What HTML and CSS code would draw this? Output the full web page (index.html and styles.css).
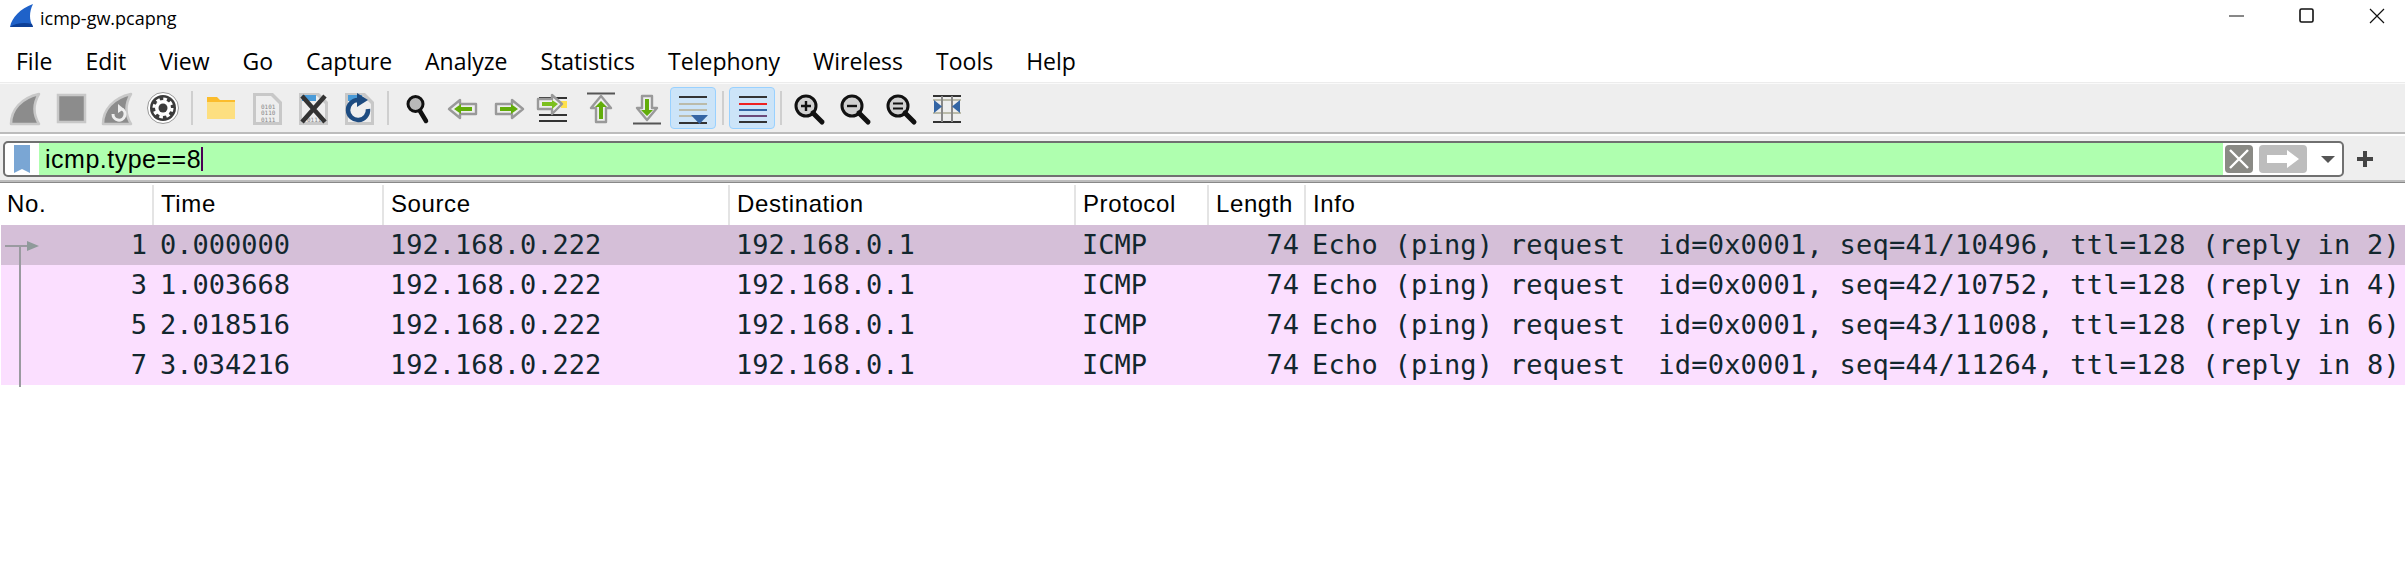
FILE: index.html
```html
<!DOCTYPE html>
<html lang="en">
<head>
  <meta charset="UTF-8" />
  <title>icmp-gw.pcapng</title>
  <link rel="stylesheet" href="styles.css">
</head>
<body>

  <div class="titlebar">
    <svg class="logo" width="24" height="24" viewBox="0 0 24 24">
      <path d="M0 23 C2 13 10 5 23 0 C19 8 19 16 23 23 Z" fill="#1f62c9"/>
      <path d="M0 23 C5 19 15 18 22 20 L23 23 Z" fill="#0d3f96"/>
    </svg>
    <span class="title">icmp-gw.pcapng</span>
    <div class="win-buttons">
      <svg width="16" height="16" viewBox="0 0 16 16"><path d="M0 8 H15" stroke="#111" stroke-width="1"/></svg>
      <svg width="16" height="16" viewBox="0 0 16 16"><rect x="1" y="1" width="13" height="13" rx="1.5" fill="none" stroke="#111" stroke-width="1.6"/></svg>
      <svg width="16" height="16" viewBox="0 0 16 16"><path d="M1 1 L15 15 M15 1 L1 15" stroke="#111" stroke-width="1.2"/></svg>
    </div>
  </div>

  <nav class="menubar">
    <span>File</span><span>Edit</span><span>View</span><span>Go</span><span>Capture</span><span>Analyze</span><span>Statistics</span><span>Telephony</span><span>Wireless</span><span>Tools</span><span>Help</span>
  </nav>

  <div class="toolbar">
    <button class="tool"><svg width="36" height="36" viewBox="0 0 36 36"><path d="M4 34 C4 20 14 8 32 4 C26 14 26 24 32 34 Z" fill="#8c8c8c" stroke="#c8c8c8" stroke-width="2.5" stroke-linejoin="round"/></svg></button>
    <button class="tool"><svg width="36" height="36" viewBox="0 0 36 36"><rect x="5" y="5" width="27" height="27" fill="#8c8c8c" stroke="#c8c8c8" stroke-width="2.5"/></svg></button>
    <button class="tool"><svg width="36" height="36" viewBox="0 0 36 36"><path d="M4 34 C4 20 14 8 32 4 C26 14 26 24 32 34 Z" fill="#8c8c8c" stroke="#c8c8c8" stroke-width="2.5" stroke-linejoin="round"/><path d="M14 24 A6 6 0 1 0 23 19" fill="none" stroke="#eee" stroke-width="3"/><path d="M19 14 L25 19 L19 23 Z" fill="#eee"/></svg></button>
    <button class="tool"><svg width="36" height="36" viewBox="0 0 36 36"><circle cx="18" cy="18" r="15.5" fill="#fff" stroke="#999" stroke-width="1"/><circle cx="18" cy="18" r="13" fill="#3b3b3b"/><circle cx="18" cy="18" r="8" fill="#fff"/><circle cx="18" cy="18" r="9" fill="none" stroke="#fff" stroke-width="3" stroke-dasharray="3.6 3.47"/><circle cx="18" cy="18" r="4.5" fill="#3b3b3b"/></svg></button>
    <i class="sep"></i>
    <button class="tool"><svg width="36" height="36" viewBox="0 0 36 36"><path d="M4 7 H14 L17 10 H32 V14 H4 Z" fill="#fbbc2c"/><rect x="4" y="12" width="28" height="17" fill="#fddf80"/></svg></button>
    <button class="tool"><svg width="36" height="36" viewBox="0 0 36 36"><use href="#page"/><text class="bits" x="12" y="19">0101</text><text class="bits" x="12" y="25">0110</text><text class="bits" x="12" y="31.5">0111</text></svg></button>
    <button class="tool"><svg width="36" height="36" viewBox="0 0 36 36"><use href="#page"/><path d="M7 5 H21 V11 H7 Z" fill="#4a9bd8"/><text class="bits" x="12" y="31.5">0111</text><path d="M7 6 L30 32 M30 6 L7 32" stroke="#333" stroke-width="4.5"/></svg></button>
    <button class="tool"><svg width="36" height="36" viewBox="0 0 36 36"><use href="#page"/><path d="M7 5 H21 V11 H7 Z" fill="#4a9bd8"/><path d="M27 19 A10 10 0 1 1 17 10" fill="none" stroke="#1d4b80" stroke-width="4.5"/><path d="M16 3 L27 10 L16 17 Z" fill="#1d4b80"/></svg></button>
    <i class="sep"></i>
    <button class="tool"><svg width="36" height="36" viewBox="0 0 36 36"><circle cx="16.5" cy="14" r="7.5" fill="#b8b8b8" stroke="#111" stroke-width="3"/><path d="M21 21 L27 31" stroke="#111" stroke-width="4.5" stroke-linecap="round"/></svg></button>
    <button class="tool"><svg width="36" height="36" viewBox="0 0 36 36"><path d="M4 19 L15 10 V14 H31 V24 H15 V28 Z" fill="#eee" stroke="#999" stroke-width="2.4" stroke-linejoin="round"/><path d="M9 19 L16 14 V17 H27 V21 H16 V24 Z" fill="#62ad0a"/></svg></button>
    <button class="tool"><svg width="36" height="36" viewBox="0 0 36 36"><path d="M32 19 L21 10 V14 H5 V24 H21 V28 Z" fill="#eee" stroke="#999" stroke-width="2.4" stroke-linejoin="round"/><path d="M27 19 L20 14 V17 H9 V21 H20 V24 Z" fill="#62ad0a"/></svg></button>
    <button class="tool"><svg width="36" height="36" viewBox="0 0 36 36"><path d="M2 8 H30 M2 14 H30 M2 25 H30 M2 31 H30" stroke="#333" stroke-width="2"/><rect x="24" y="11" width="6" height="7" fill="#ffe14d"/><path d="M25 14 L15 5 V9 H1 V19 H15 V24 Z" fill="#eee" stroke="#999" stroke-width="2.4" stroke-linejoin="round"/><path d="M21 14 L15 10 V12 H5 V16 H15 V19 Z" fill="#7cc01e"/></svg></button>
    <button class="tool"><svg width="36" height="36" viewBox="0 0 36 36"><path d="M4 3.5 H32" stroke="#555" stroke-width="2"/><path d="M18 6 L28 18 H23 V32 H13 V18 H8 Z" fill="#eee" stroke="#999" stroke-width="2.4" stroke-linejoin="round"/><path d="M18 11 L24 17 H20 V29 H16 V17 H12 Z" fill="#62ad0a"/></svg></button>
    <button class="tool"><svg width="36" height="36" viewBox="0 0 36 36"><path d="M4 33.5 H32" stroke="#555" stroke-width="2"/><path d="M13 6 H23 V18 H28 L18 30 L8 18 H13 Z" fill="#eee" stroke="#999" stroke-width="2.4" stroke-linejoin="round"/><path d="M16 9 H20 V20 H24 L18 26 L12 20 H16 Z" fill="#62ad0a"/></svg></button>
    <button class="tool active"><svg width="36" height="36" viewBox="0 0 36 36"><path d="M4 7 H32 M4 33 H32" stroke="#333" stroke-width="2"/><path d="M4 14 H32 M4 20 H32 M4 26 H32" stroke="#bbbbaa" stroke-width="2"/><path d="M16 25 H33 L24.500 34 Z" fill="#3465a4"/></svg></button>
    <i class="sep narrow"></i>
    <button class="tool active"><svg width="36" height="36" viewBox="0 0 36 36"><path d="M5 7 H33 M5 32 H33" stroke="#333" stroke-width="2"/><path d="M5 14 H33" stroke="#ee2222" stroke-width="2"/><path d="M5 20 H33" stroke="#3465a4" stroke-width="2"/><path d="M5 26 H33" stroke="#6b4a7a" stroke-width="2"/></svg></button>
    <i class="sep tight"></i>
    <button class="tool"><svg width="36" height="36" viewBox="0 0 36 36"><circle cx="15" cy="16" r="10" fill="#d0d0d0" stroke="#111" stroke-width="3"/><path d="M22 23 L31 32" stroke="#111" stroke-width="5" stroke-linecap="round"/><path d="M10 16 H20 M15 11 V21" stroke="#111" stroke-width="2.4"/></svg></button>
    <button class="tool"><svg width="36" height="36" viewBox="0 0 36 36"><circle cx="15" cy="16" r="10" fill="#d0d0d0" stroke="#111" stroke-width="3"/><path d="M22 23 L31 32" stroke="#111" stroke-width="5" stroke-linecap="round"/><path d="M10 16 H20" stroke="#111" stroke-width="2.4"/></svg></button>
    <button class="tool"><svg width="36" height="36" viewBox="0 0 36 36"><circle cx="15" cy="16" r="10" fill="#d0d0d0" stroke="#111" stroke-width="3"/><path d="M22 23 L31 32" stroke="#111" stroke-width="5" stroke-linecap="round"/><path d="M10 13.500 H20 M10 18.500 H20" stroke="#111" stroke-width="2.2"/></svg></button>
    <button class="tool"><svg width="36" height="36" viewBox="0 0 36 36"><path d="M4 6 H32 M4 32 H32" stroke="#333" stroke-width="2"/><path d="M4 10 H32 M4 23 H32" stroke="#bbbbaa" stroke-width="2"/><path d="M13 6 V32 M23 6 V32" stroke="#888" stroke-width="2"/><path d="M5 10 L13 16.500 L5 23 Z M31 10 L23 16.500 L31 23 Z" fill="#3465a4"/></svg></button>
  </div>

  <svg class="defs" width="0" height="0">
    <symbol id="page" viewBox="0 0 36 36" width="36" height="36">
      <path d="M4 3 H24 L33 12 V35 H4 Z" fill="#c8c8c8"/>
      <path d="M7 6 H22 L30 14 V32 H7 Z" fill="#eee"/>
    </symbol>
  </svg>

  <div class="filterbar">
    <div class="filter">
      <div class="bookmark">
        <svg width="16" height="28" viewBox="0 0 16 28"><path d="M0 0 H16 V28 L8 24 L0 28 Z" fill="#7aa6d4"/></svg>
      </div>
      <div class="filter-input"><span>icmp.type==8</span><i class="caret"></i></div>
      <button class="clear"><svg width="22" height="22" viewBox="0 0 22 22"><path d="M2 2 L20 20 M20 2 L2 20" stroke="#fff" stroke-width="2.4"/></svg></button>
      <button class="apply"><svg width="32" height="18" viewBox="0 0 32 18"><path d="M0 5 H20 V0 L32 9 L20 18 V13 H0 Z" fill="#fff"/></svg></button>
      <i class="dropdown"></i>
    </div>
    <span class="plus"></span>
  </div>

  <div class="packets">
    <div class="row head">
      <div>No.</div><div>Time</div><div>Source</div><div>Destination</div><div>Protocol</div><div>Length</div><div>Info</div>
    </div>
    <div class="row pkt current">
      <div class="num">1</div><div>0.000000</div><div>192.168.0.222</div><div>192.168.0.1</div><div>ICMP</div><div class="num">74</div><div class="info">Echo (ping) request  id=0x0001, seq=41/10496, ttl=128 (reply in 2)</div>
    </div>
    <div class="row pkt">
      <div class="num">3</div><div>1.003668</div><div>192.168.0.222</div><div>192.168.0.1</div><div>ICMP</div><div class="num">74</div><div class="info">Echo (ping) request  id=0x0001, seq=42/10752, ttl=128 (reply in 4)</div>
    </div>
    <div class="row pkt">
      <div class="num">5</div><div>2.018516</div><div>192.168.0.222</div><div>192.168.0.1</div><div>ICMP</div><div class="num">74</div><div class="info">Echo (ping) request  id=0x0001, seq=43/11008, ttl=128 (reply in 6)</div>
    </div>
    <div class="row pkt">
      <div class="num">7</div><div>3.034216</div><div>192.168.0.222</div><div>192.168.0.1</div><div>ICMP</div><div class="num">74</div><div class="info">Echo (ping) request  id=0x0001, seq=44/11264, ttl=128 (reply in 8)</div>
    </div>
    <svg class="related" width="40" height="150" viewBox="0 0 40 150">
      <path d="M5 8 H27 M20 8 V149" stroke="#9a9aa0" stroke-width="2" fill="none"/>
      <path d="M27 3 L39 8 L27 13 Z" fill="#8f9a9a"/>
    </svg>
  </div>

</body>
</html>
```

FILE: styles.css
```css
* { box-sizing: border-box; margin: 0; padding: 0; }
body {
  font-family: 'Open Sans', sans-serif;
  background: #fff;
  color: #000;
  height: 576px;
  overflow: hidden;
}

.titlebar {
  height: 44px;
  display: flex;
  align-items: flex-start;
  padding: 4px 0 0 10px;
}

.title {
  font-size: 18px;
  margin-left: 6px;
  line-height: 28px;
}

.win-buttons {
  margin-left: auto;
  display: flex;
  gap: 54px;
  padding: 4px 20px 0 0;
}

.menubar {
  height: 38px;
  display: flex;
  padding-left: 16px;
  font-size: 23px;
  line-height: 34px;
  gap: 33px;
}

.toolbar {
  height: 52px;
  border-top: 1px solid #ececec;
  border-bottom: 2px solid #bcbcbc;
  background: #eee;
  box-shadow: inset 0 1px 0 #fafafa;
  display: flex;
  align-items: center;
  padding-left: 2px;
}

.tool {
  width: 46px;
  height: 46px;
  border: 1px solid transparent;
  background: none;
  border-radius: 4px;
  display: flex;
  align-items: center;
  justify-content: center;
}

.tool svg { overflow: visible; }

.tool.active {
  height: 42px;
  background: #cce4f8;
  border-color: #99d1ff;
}

.sep {
  width: 12px;
  display: flex;
  justify-content: center;
}

.sep::after {
  content: "";
  width: 2px;
  height: 34px;
  background: #cfcfcf;
}

.sep.narrow { width: 13px; }
.sep.tight { width: 11px; }

.defs { position: absolute; }

.filterbar {
  height: 46px;
  margin-top: 2px;
  background: #eee;
  border-bottom: 2px solid #bcbcbc;
  display: flex;
  align-items: flex-start;
  padding: 5px 0 0 3px;
  position: relative;
}

.filterbar::after {
  content: "";
  position: absolute;
  left: 0;
  right: 0;
  bottom: -3px;
  height: 1px;
  background: #888;
}

.filter {
  width: 2341px;
  height: 36px;
  border: 2px solid #707070;
  border-radius: 5px;
  background: #fff;
  display: flex;
  align-items: stretch;
}

.bookmark {
  width: 34px;
  display: flex;
  align-items: center;
  justify-content: center;
}

.filter-input {
  flex: 1;
  background: #afffaf;
  font-family: 'Liberation Sans', sans-serif;
  font-size: 25px;
  letter-spacing: 0.5px;
  line-height: 32px;
  padding-left: 6px;
  display: flex;
  align-items: center;
}

.caret {
  width: 2px;
  height: 24px;
  background: #4b0055;
}

.clear {
  width: 28px;
  margin: 2px 0 2px 2px;
  border: none;
  border-radius: 4px;
  background: #8a8a85;
  display: flex;
  align-items: center;
  justify-content: center;
}

.apply {
  width: 48px;
  margin: 2px 0 2px 6px;
  border: none;
  border-radius: 4px;
  background: #bdbdbd;
  display: flex;
  align-items: center;
  justify-content: center;
}

.dropdown {
  width: 0;
  height: 0;
  margin: 13px 7px 0 14px;
  border-left: 7px solid transparent;
  border-right: 7px solid transparent;
  border-top: 7px solid #555;
}

.plus {
  width: 16px;
  height: 16px;
  margin: 10px 0 0 13px;
  background:
    linear-gradient(#444, #444) center / 16px 4px no-repeat,
    linear-gradient(#444, #444) center / 4px 16px no-repeat;
}

.packets {
  position: relative;
  margin-top: 3px;
}

.row {
  display: grid;
  grid-template-columns: 152px 230px 346px 346px 133px 97px 1fr;
  height: 40px;
  align-items: center;
}

.head {
  grid-template-columns: 154px 230px 346px 346px 133px 97px 1fr;
  font-family: 'Liberation Sans', sans-serif;
  font-size: 24px;
  letter-spacing: 0.6px;
  align-items: stretch;
  line-height: 38px;
}

.head > div {
  padding-left: 7px;
  border-right: 2px solid #e4e4e4;
}

.head > div:last-child { border-right: none; }

.pkt {
  margin-left: 1px;
  background: #fbdfff;
  color: #12272e;
  font-family: 'DejaVu Sans Mono', monospace;
  font-size: 27px;
  line-height: 40px;
  white-space: pre;
}

.pkt.current { background: #d5bfd8; }

.pkt > div {
  padding-left: 7px;
  overflow: hidden;
}

.pkt > .num {
  padding: 0 6px 0 0;
  text-align: right;
}

.pkt > .info { letter-spacing: 0.23px; }

.related {
  position: absolute;
  left: 0;
  top: 53px;
}

.bits {
  font-family: 'DejaVu Sans Mono', monospace;
  font-size: 6px;
  fill: #888;
}
```
